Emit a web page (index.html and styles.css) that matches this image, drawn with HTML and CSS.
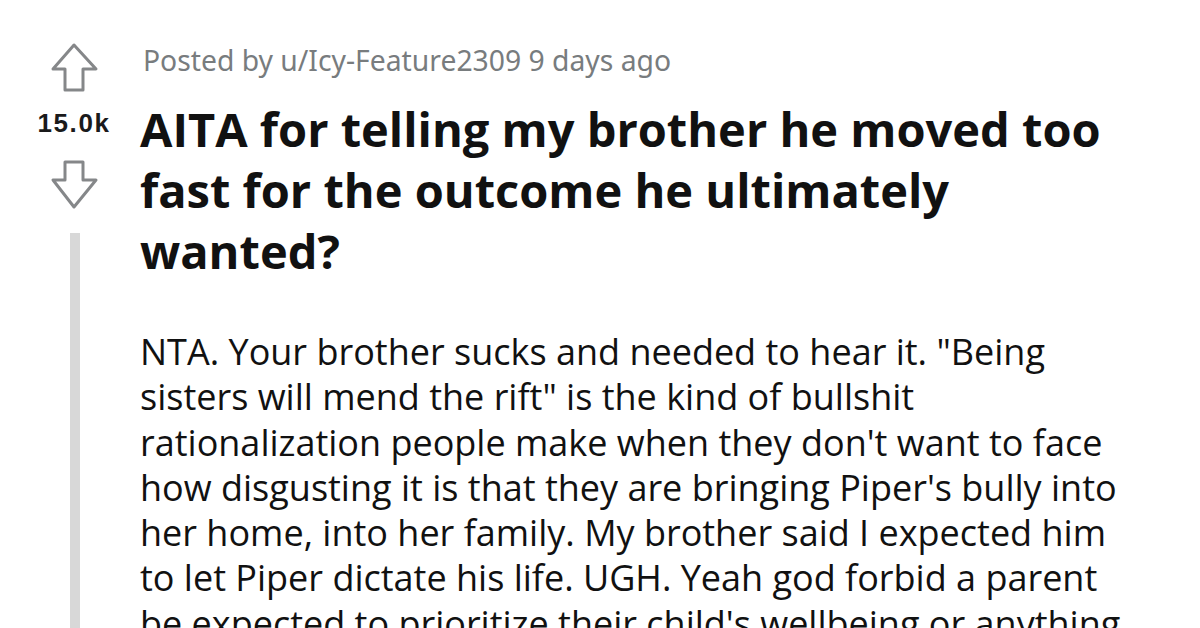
FILE: index.html
```html
<!DOCTYPE html>
<html>
<head>
<meta charset="utf-8">
<link rel="stylesheet" href="styles.css">
</head>
<body>
<div class="post">
  <div class="votes">
    <svg class="arrow up" width="52" height="52" viewBox="48 42 52 52">
      <path d="M74 45 L96 69 L83 69 L83 90 L65 90 L65 69 L53 69 Z" fill="none" stroke="#858789" stroke-width="3" stroke-linejoin="round"/>
    </svg>
    <div class="score">15.0k</div>
    <svg class="arrow down" width="52" height="52" viewBox="48 158 52 52">
      <path d="M65 162 L83 162 L83 180 L96 180 L74 207 L53 180 L65 180 Z" fill="none" stroke="#858789" stroke-width="3" stroke-linejoin="round"/>
    </svg>
    <div class="thread-line"></div>
  </div>
  <div class="content">
    <div class="meta">Posted by u/Icy-Feature2309 9 days ago</div>
    <h1 class="title">AITA for telling my brother he moved too fast for the outcome he ultimately wanted?</h1>
    <p class="body-text">NTA. Your brother sucks and needed to hear it. "Being sisters will mend the rift" is the kind of bullshit rationalization people make when they don't want to face how disgusting it is that they are bringing Piper's bully into her home, into her family. My brother said I expected him to let Piper dictate his life. UGH. Yeah god forbid a parent be expected to prioritize their child's wellbeing or anything like that.</p>
  </div>
</div>
</body>
</html>
```

FILE: styles.css
```css
html, body {
  margin: 0;
  padding: 0;
  background: #ffffff;
  overflow: hidden;
  height: 628px;
}

.post {
  display: grid;
  grid-template-columns: 140px 1fr;
  height: 628px;
}

.votes {
  display: flex;
  flex-direction: column;
  align-items: center;
  padding-left: 8px;
  padding-top: 42px;
}

.arrow {
  display: block;
}

.score {
  font-family: "Liberation Sans", Arial, sans-serif;
  font-weight: 700;
  font-size: 26px;
  letter-spacing: 1.6px;
  color: #1a1a1b;
  line-height: 28px;
  margin-top: 15px;
  margin-bottom: 21px;
}

.down {
  margin-bottom: 23px;
}

.thread-line {
  width: 10px;
  flex: 1;
  background: #d8d8d8;
  margin-left: 2px;
}

.content {
  padding-right: 58px;
}

.meta {
  font-family: "Noto Sans", sans-serif;
  font-size: 28.3px;
  color: #787c7e;
  margin-top: 42px;
  line-height: 36px;
  padding-left: 3px;
}

.title {
  font-family: "Open Sans", sans-serif;
  font-weight: 700;
  font-size: 47px;
  line-height: 61px;
  color: #111;
  margin: 21px 0 0 0;
  max-width: 980px;
}

.body-text {
  font-family: "Open Sans", sans-serif;
  font-size: 36px;
  line-height: 45.3px;
  color: #111;
  margin: 47px 0 0 0;
}
```
